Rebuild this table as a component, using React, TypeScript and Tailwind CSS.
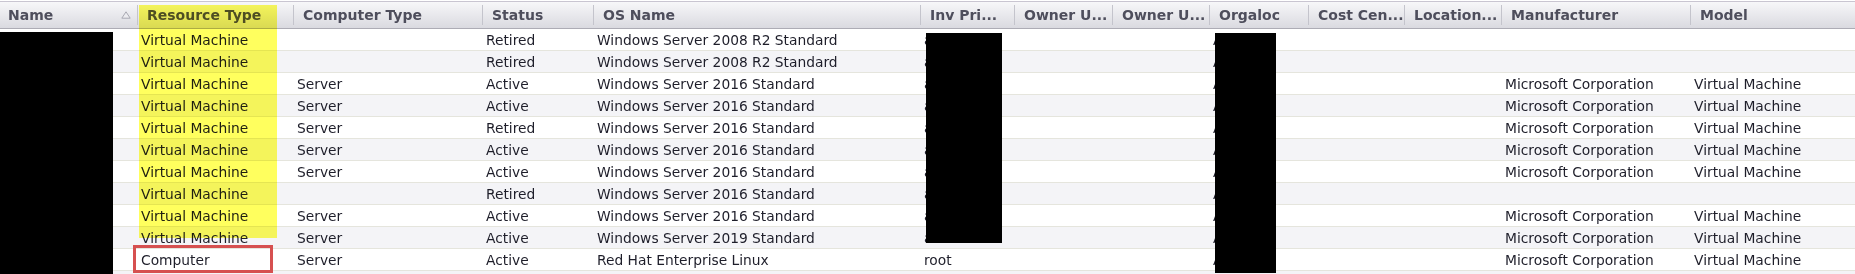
import React from "react";

type Col = { title: string; w: string; first?: boolean };

const cols: Col[] = [
  { title: "Name", w: "w-[137px]", first: true },
  { title: "Resource Type", w: "w-[156px]" },
  { title: "Computer Type", w: "w-[189px]" },
  { title: "Status", w: "w-[111px]" },
  { title: "OS Name", w: "w-[327px]" },
  { title: "Inv Pri...", w: "w-[94px]" },
  { title: "Owner U...", w: "w-[98px]" },
  { title: "Owner U...", w: "w-[97px]" },
  { title: "Orgaloc", w: "w-[99px]" },
  { title: "Cost Cen...", w: "w-[96px]" },
  { title: "Location...", w: "w-[97px]" },
  { title: "Manufacturer", w: "w-[189px]" },
  { title: "Model", w: "w-[165px]" },
];

const WS08 = "Windows Server 2008 R2 Standard";
const WS16 = "Windows Server 2016 Standard";
const WS19 = "Windows Server 2019 Standard";
const VM = "Virtual Machine";
const MC = "Microsoft Corporation";

const rows: string[][] = [
  ["", VM, "", "Retired", WS08, "a", "", "", "A", "", "", "", ""],
  ["", VM, "", "Retired", WS08, "a", "", "", "A", "", "", "", ""],
  ["", VM, "Server", "Active", WS16, "a", "", "", "A", "", "", MC, VM],
  ["", VM, "Server", "Active", WS16, "a", "", "", "A", "", "", MC, VM],
  ["", VM, "Server", "Retired", WS16, "a", "", "", "A", "", "", MC, VM],
  ["", VM, "Server", "Active", WS16, "a", "", "", "A", "", "", MC, VM],
  ["", VM, "Server", "Active", WS16, "a", "", "", "A", "", "", MC, VM],
  ["", VM, "", "Retired", WS16, "a", "", "", "A", "", "", "", ""],
  ["", VM, "Server", "Active", WS16, "a", "", "", "A", "", "", MC, VM],
  ["", VM, "Server", "Active", WS19, "a", "", "", "A", "", "", MC, VM],
  ["", "Computer", "Server", "Active", "Red Hat Enterprise Linux", "root", "", "", "A", "", "", MC, VM],
  ["", "", "", "", "", "", "", "", "", "", "", "", ""],
];

function SortArrow() {
  return (
    <svg width="10" height="8" viewBox="0 0 10 8" className="shrink-0">
      <polygon points="5,0.8 9.2,7.2 0.8,7.2" fill="#ececf0" stroke="#a9a9b2" strokeWidth="1" />
    </svg>
  );
}

export default function App() {
  return (
    <div className="relative w-[1855px] h-[274px] overflow-hidden bg-white font-['DejaVu_Sans',sans-serif]">
      {/* header */}
      <div className="mt-px h-[28px] flex border-t border-b border-t-[#c9c5d1] border-b-[#adacb5] bg-gradient-to-b from-[#f7f7f9] to-[#dadae0]">
        {cols.map((c, i) => (
          <div key={i} className={`${c.w} shrink-0 flex items-center`}>
            {!c.first && <span className="w-px h-[20px] bg-[#c4c4cc] shrink-0" />}
            {c.first ? (
              <div className="flex items-center w-full pl-[8px] pr-[6px]">
                <span className="flex-1 text-[14px] font-bold text-[#4e4e5c] whitespace-nowrap">{c.title}</span>
                <SortArrow />
              </div>
            ) : (
              <span className="pl-[9px] text-[14px] font-bold text-[#4e4e5c] whitespace-nowrap">{c.title}</span>
            )}
          </div>
        ))}
      </div>
      {/* rows */}
      {rows.map((r, ri) => (
        <div
          key={ri}
          className={`h-[22px] flex border-b border-[#e5e5dd] ${ri % 2 === 0 ? "bg-white" : "bg-[#f4f4f7]"}`}
        >
          {cols.map((c, ci) => (
            <div key={ci} className={`${c.w} shrink-0 flex items-center pl-[4px] pt-[2px] overflow-hidden`}>
              <span className="text-[13.8px] text-[#1e1e2a] whitespace-nowrap">{r[ci]}</span>
            </div>
          ))}
        </div>
      ))}

      {/* yellow highlight over Resource Type column */}
      <div className="absolute left-[139px] top-[5px] w-[138px] h-[233px] bg-[#ffff5e] mix-blend-multiply" />
      {/* red box around Computer */}
      <div className="absolute left-[133px] top-[245px] w-[140px] h-[28px] border-[3px] border-[#d65050]" />
      {/* redactions */}
      <div className="absolute left-0 top-[32px] w-[113px] h-[242px] bg-black" />
      <div className="absolute left-[926px] top-[33px] w-[76px] h-[210px] bg-black" />
      <div className="absolute left-[1215px] top-[33px] w-[61px] h-[240px] bg-black" />
    </div>
  );
}
